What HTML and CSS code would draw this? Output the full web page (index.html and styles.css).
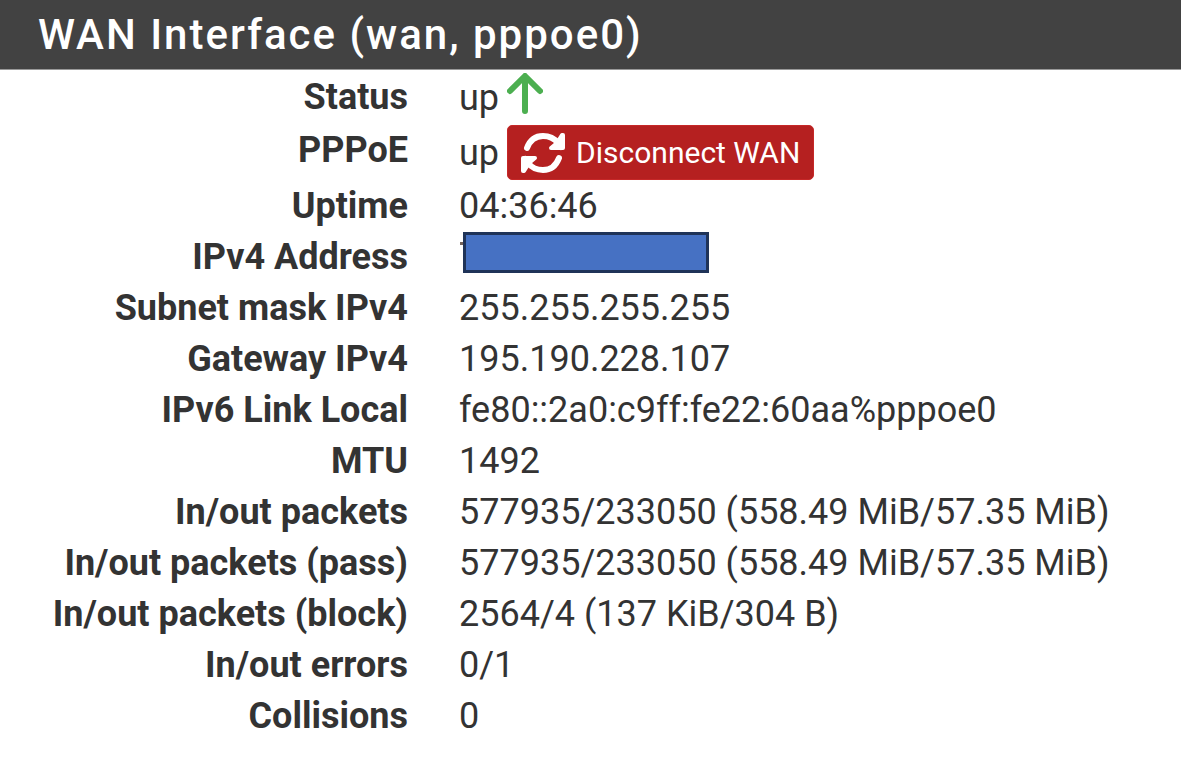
FILE: index.html
```
<!DOCTYPE html>
<html lang="en">
<head>
    <meta charset="UTF-8">
    <meta name="viewport" content="width=device-width, initial-scale=1.0">
    <title>Status: Interfaces</title>
    <link rel="stylesheet" href="styles.css">
</head>
<body>
    <section class="panel">
        <h2 class="panel-heading">WAN Interface (wan, pppoe0)</h2>
        <dl class="status-list">
            <dt>Status</dt>
            <dd class="tall">up
                <svg class="icon-up" viewBox="0 0 36 42" role="img" aria-label="up"><path d="M18 38V4M3 18L18 3l15 15" fill="none" stroke="currentColor" stroke-width="6" stroke-linecap="round" stroke-linejoin="round"/></svg>
            </dd>
            <dt>PPPoE</dt>
            <dd>up
                <button type="button" class="btn-danger">
                    <svg class="icon-refresh" viewBox="0 0 44 42" aria-hidden="true">
                        <g fill="none" stroke="currentColor" stroke-width="6" stroke-linecap="round" stroke-linejoin="round">
                            <path d="M6 16C9 8 15 4 22 4c6 0 11 2 15 7l3 4"/>
                            <path d="M38 26c-3 8-9 12-16 12-6 0-11-2-15-7l-3-4"/>
                        </g>
                        <g fill="currentColor" stroke="currentColor" stroke-width="4" stroke-linejoin="round">
                            <path d="M42 3v13H30l6-5 5-8z"/>
                            <path d="M2 39V26h12l-6 5-5 8z"/>
                        </g>
                    </svg>
                    Disconnect WAN
                </button>
            </dd>
            <dt>Uptime</dt>
            <dd>04:36:46</dd>
            <dt>IPv4 Address</dt>
            <dd><span class="redacted"></span></dd>
            <dt>Subnet mask IPv4</dt>
            <dd>255.255.255.255</dd>
            <dt>Gateway IPv4</dt>
            <dd>195.190.228.107</dd>
            <dt>IPv6 Link Local</dt>
            <dd>fe80::2a0:c9ff:fe22:60aa%pppoe0</dd>
            <dt>MTU</dt>
            <dd>1492</dd>
            <dt>In/out packets</dt>
            <dd>577935/233050 (558.49 MiB/57.35 MiB)</dd>
            <dt>In/out packets (pass)</dt>
            <dd>577935/233050 (558.49 MiB/57.35 MiB)</dd>
            <dt>In/out packets (block)</dt>
            <dd>2564/4 (137 KiB/304 B)</dd>
            <dt>In/out errors</dt>
            <dd>0/1</dd>
            <dt>Collisions</dt>
            <dd>0</dd>
        </dl>
    </section>
</body>
</html>
```
FILE: styles.css
```
body {
    margin: 0;
    background-color: #fff;
    color: #333;
    font-family: Roboto, sans-serif;
    font-size: 36px;
    line-height: 51px;
}

.panel-heading {
    margin: 0;
    padding: 0 38px;
    border-bottom: 1px solid #999;
    background-color: #424242;
    color: #fff;
    font-size: 42px;
    font-weight: 500;
    line-height: 69px;
    letter-spacing: 2px;
}

.status-list {
    display: grid;
    grid-template-columns: 408px 1fr;
    column-gap: 51px;
    margin: 0;
    padding: 2px 0 32px;
}

dt {
    font-weight: 700;
    text-align: right;
}

dd {
    display: flex;
    align-items: center;
    gap: 8px;
    margin: 0;
}

.tall {
    min-height: 53px;
}

.icon-up {
    width: 36px;
    height: 42px;
    margin-bottom: 10px;
    color: #4caf50;
}

.btn-danger {
    display: flex;
    align-items: center;
    gap: 11px;
    height: 55px;
    margin-bottom: 1px;
    padding: 0 13px;
    border: 1px solid #c62828;
    border-radius: 5px;
    background-color: #b52020;
    color: #fff;
    font-family: inherit;
    font-size: 30px;
    cursor: pointer;
}

.icon-refresh {
    width: 44px;
    height: 42px;
}

.redacted {
    position: relative;
    box-sizing: border-box;
    width: 246px;
    height: 41px;
    margin: 0 0 10px 4px;
    border: 3px solid #1f3358;
    background-color: #4671c3;
}

/* edge of the first digit, left of the cover */
.redacted::before {
    content: "";
    position: absolute;
    top: 7px;
    left: -6px;
    width: 3px;
    height: 3px;
    background-color: #75635a;
}
```
